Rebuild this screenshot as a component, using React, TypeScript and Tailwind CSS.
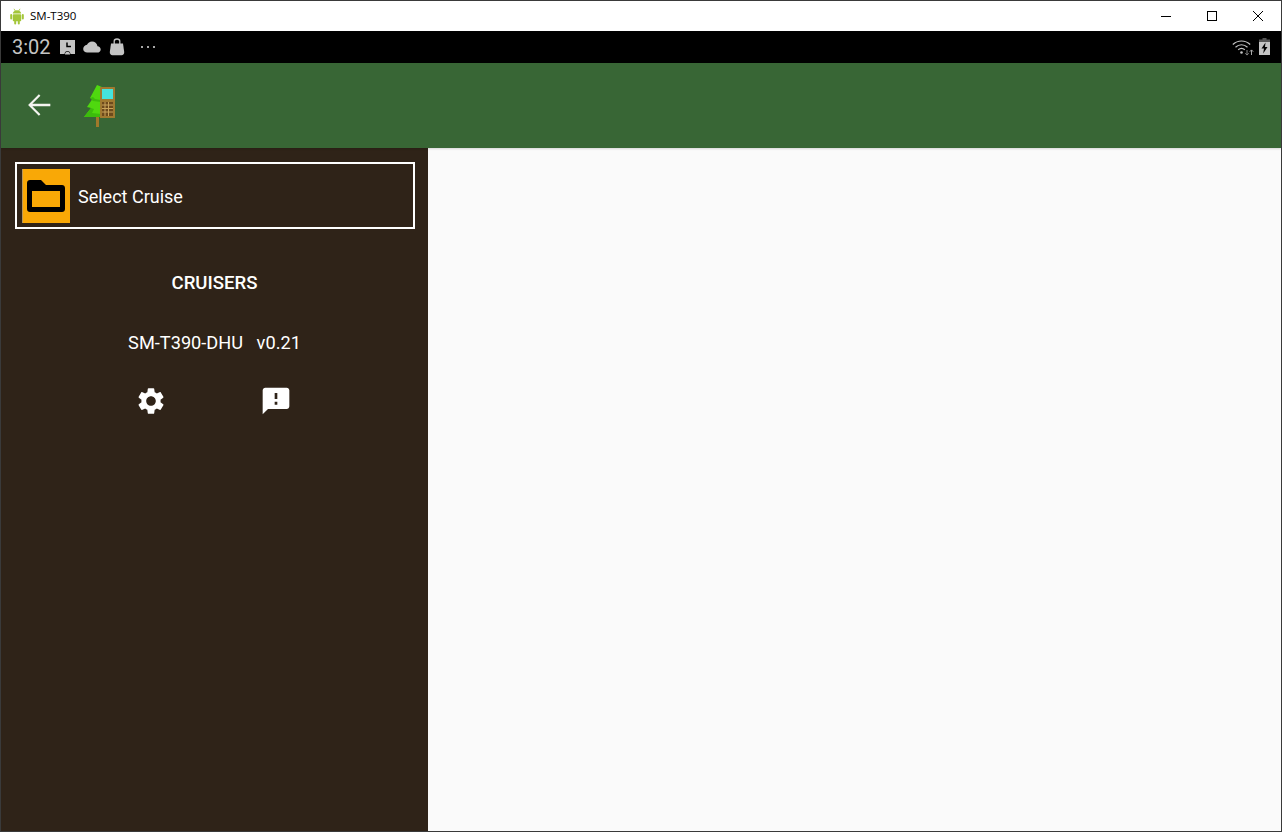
function AndroidLogo() {
  return (
    <svg width="16" height="17" viewBox="0 0 16 17" fill="#a4c639">
      <path d="M3.800 5.600c.2-2 1.900-3.400 4.200-3.400s4 1.400 4.200 3.400H3.800z" />
      <path d="M5 .8l1.300 2.200M11 .8L9.700 3" stroke="#a4c639" strokeWidth="0.8" />
      <rect x="3.800" y="6.200" width="8.400" height="7" rx="0.800" />
      <rect x="1.200" y="6" width="2" height="5.500" rx="1" />
      <rect x="12.800" y="6" width="2" height="5.500" rx="1" />
      <rect x="5.200" y="12.500" width="2" height="4" rx="1" />
      <rect x="8.800" y="12.500" width="2" height="4" rx="1" />
    </svg>
  );
}

function TitleBar() {
  return (
    <div className="h-[30px] bg-white flex items-center shrink-0">
      <div className="ml-[8px] mr-[5px] flex items-center">
        <AndroidLogo />
      </div>
      <span className="text-[11.500px] text-black font-['Open_Sans',sans-serif]">SM-T390</span>
      <div className="ml-auto flex items-center">
        <div className="w-[46px] h-[30px] flex items-center justify-center">
          <svg width="10" height="10" viewBox="0 0 10 10">
            <path d="M0 5.500h10" stroke="#000" strokeWidth="1" />
          </svg>
        </div>
        <div className="w-[46px] h-[30px] flex items-center justify-center">
          <svg width="10" height="10" viewBox="0 0 10 10">
            <rect x="0.500" y="0.500" width="9" height="9" fill="none" stroke="#000" strokeWidth="1" />
          </svg>
        </div>
        <div className="w-[46px] h-[30px] flex items-center justify-center">
          <svg width="10" height="10" viewBox="0 0 10 10">
            <path d="M0 0l10 10M10 0L0 10" stroke="#000" strokeWidth="1" />
          </svg>
        </div>
      </div>
    </div>
  );
}

function StatusBar() {
  return (
    <div className="h-[32px] bg-black flex items-center shrink-0 text-[#c4c4c4]">
      <span className="ml-[11px] text-[20px] leading-none font-['Roboto',sans-serif]">3:02</span>
      <div className="ml-[8px] flex items-center gap-[7px]">
        <svg width="17" height="17" viewBox="0 0 17 17" fill="#c4c4c4">
          <path d="M1 1h15v14h-4.500c-.3-2-1.400-3-3-3s-2.700 1-3 3H1V1z" />
          <path d="M6 14.500c.5-1.200 1.500-1.800 2.500-1.800s2 .6 2.500 1.800v1H6v-1z" />
          <path d="M8 3.500v4h4" fill="none" stroke="#000" strokeWidth="1.500" />
        </svg>
        <svg width="18" height="12" viewBox="0 0 18 12" fill="#c4c4c4">
          <path d="M14.500 5.200C14 2.500 11.800.5 9 .5 6.800.500 4.900 1.800 4 3.700 1.800 4 .2 5.800.2 8c0 2.300 1.800 3.500 4 3.500h10c1.900 0 3.500-1.100 3.500-3.100 0-1.700-1.400-3.100-3.200-3.200z" />
        </svg>
        <svg className="ml-[1px]" width="16" height="18" viewBox="0 0 16 18" fill="#c4c4c4">
          <path d="M2 5.500h12l1.200 8.500c.2 1.800-1 3.200-2.700 3.200h-9C1.800 17.200.600 15.800.8 14L2 5.500z" />
          <path d="M5.200 7V3.200C5.200 2 6.400 1 8 1s2.800 1 2.800 2.200V7" fill="none" stroke="#c4c4c4" strokeWidth="1.300" />
        </svg>
      </div>
      <div className="ml-[16px] flex items-center gap-[4px]">
        <span className="w-[2px] h-[2px] bg-[#a8a8a8]" />
        <span className="w-[2px] h-[2px] bg-[#a8a8a8]" />
        <span className="w-[2px] h-[2px] bg-[#a8a8a8]" />
      </div>
      <div className="ml-auto mr-[11px] flex items-center gap-[5px]">
        <svg width="22" height="17" viewBox="0 0 22 17" fill="none" stroke="#c4c4c4" strokeWidth="1.200">
          <path d="M.8 5.500C5.800.800 13.200.800 18.200 5.500" />
          <path d="M3.500 8.200c3.600-3.200 8.400-3.200 12 0" />
          <path d="M6.200 10.800c2-1.700 4.600-1.700 6.600 0" />
          <circle cx="9.500" cy="13.500" r="1.300" fill="#c4c4c4" stroke="none" />
          <path d="M15 11v5M13.300 14.300l1.700 1.800 1.700-1.800" strokeWidth="1" stroke="#888" />
          <path d="M19.500 16v-5M17.800 12.700l1.700-1.800 1.700 1.800" strokeWidth="1" stroke="#aaa" />
        </svg>
        <svg className="mb-[2px]" width="11" height="17" viewBox="0 0 11 17">
          <path d="M3.500 0h4v1.500H11V17H0V1.500h3.500V0z" fill="#555" />
          <path d="M0 4h11v13H0z" fill="#c4c4c4" />
          <path d="M6.500 4.500L2.500 10.500h2.500l-.8 5L8.500 9H6z" fill="#000" />
        </svg>
      </div>
    </div>
  );
}

// tree with a handheld data recorder in front of it
function AppLogo() {
  return (
    <svg width="32" height="43" viewBox="0 0 32 43">
      <rect x="12" y="32" width="3" height="10" fill="#a0792a" />
      <path d="M13 0l5 2v30H0l7-9-4-1 6-9-3 0z" fill="#4fd80f" />
      <path d="M0 32l7-9 3 1-2 4 9 1 1 3z" fill="#3cbc0c" />
      <path d="M6 13l3-1 2 2 6 1v2l-8-1z" fill="#3cbc0c" />
      <rect x="16" y="2" width="15" height="31" rx="0.500" fill="#a07a30" />
      <rect x="18" y="4" width="11" height="10" fill="#45e4dc" />
      <rect x="18" y="17" width="11" height="14" fill="#6d4a1c" />
      <path d="M18 20h11M18 23.500h11M18 27h11M21 17v14M24.500 17v14" stroke="#c9a35a" strokeWidth="1" />
    </svg>
  );
}

function Toolbar() {
  return (
    <div className="h-[85px] bg-[#386635] flex items-center shrink-0 shadow-[0_1px_2px_rgba(0,0,0,0.15)] relative">
      <svg className="ml-[21px] mb-[1px]" width="34" height="34" viewBox="0 0 24 24" fill="#f4f4f0">
        <path d="M20 11.200H7.300l5.700-5.700L11.900 4.400 4.300 12l7.600 7.600 1.100-1.100-5.700-5.700H20z" />
      </svg>
      <div className="ml-[28px] mt-[1px]">
        <AppLogo />
      </div>
    </div>
  );
}

function Sidebar() {
  return (
    <aside className="w-[427px] shrink-0 bg-[#2f2318] flex flex-col pt-[14px] font-['Roboto',sans-serif] text-white">
      <button className="ml-[14px] w-[400px] h-[67px] border-2 border-white flex items-center pl-[5px]">
        <div className="w-[48px] h-[54px] bg-[#f9a806] border-l border-[#b8965a] flex items-center justify-center pr-[1px]">
          <svg width="38" height="32" viewBox="0 0 38 32" fill="#000" fillRule="evenodd">
            <path d="M3 0h11l5 5h16c1.700 0 3 1.300 3 3v21c0 1.700-1.300 3-3 3H3c-1.700 0-3-1.300-3-3V3c0-1.700 1.300-3 3-3zM5 11v16h28V11z" />
          </svg>
        </div>
        <span className="ml-[8px] mt-[2px] text-[18px] leading-none">Select Cruise</span>
      </button>

      <div className="mt-[44px] text-center text-[18.600px] leading-[21px] font-medium">CRUISERS</div>

      <div className="mt-[38px] text-center text-[18.200px] leading-[21px] whitespace-pre">SM-T390-DHU   v0.21</div>

      <div className="mt-[32px] flex items-center justify-center gap-[93px] pr-[2px]">
        <svg width="32" height="32" viewBox="0 0 24 24" fill="#fff">
          <path d="M19.140 12.940c.04-.3.060-.61.060-.94 0-.32-.02-.64-.07-.94l2.030-1.580c.18-.14.230-.41.120-.61l-1.920-3.320c-.12-.22-.37-.29-.59-.22l-2.390.96c-.5-.38-1.030-.7-1.620-.94l-.36-2.540c-.04-.24-.24-.41-.48-.41h-3.840c-.24 0-.43.170-.47.410l-.36 2.540c-.59.240-1.130.570-1.620.94l-2.390-.96c-.22-.08-.47 0-.59.220L2.740 8.870c-.12.210-.08.470.12.610l2.030 1.580c-.05.300-.09.630-.09.940s.02.640.07.940l-2.030 1.580c-.18.140-.23.410-.12.610l1.920 3.320c.12.220.37.290.59.220l2.390-.96c.5.380 1.030.7 1.620.94l.36 2.540c.05.240.24.410.48.410h3.840c.24 0 .44-.17.47-.41l.36-2.540c.59-.24 1.130-.56 1.620-.94l2.390.96c.22.080.47 0 .59-.22l1.920-3.320c.12-.22.070-.47-.12-.61l-2.010-1.580zM12 15.600c-1.980 0-3.600-1.620-3.600-3.600s1.620-3.600 3.600-3.600 3.600 1.620 3.600 3.600-1.620 3.600-3.600 3.600z" />
        </svg>
        <svg width="32" height="32" viewBox="0 0 24 24" fill="#fff" fillRule="evenodd">
          <path d="M20 2H4c-1.100 0-1.990.9-1.990 2L2 22l4-4h14c1.100 0 2-.9 2-2V4c0-1.100-.9-2-2-2zM13 6h-2v4.500h2zM13 12.500h-2v2.300h2z" />
        </svg>
      </div>
    </aside>
  );
}

export default function App() {
  return (
    <div className="w-[1282px] h-[832px] flex flex-col bg-white border border-[#3a3a3a] overflow-hidden">
      <TitleBar />
      <StatusBar />
      <Toolbar />
      <div className="flex flex-1 min-h-0">
        <Sidebar />
        <main className="flex-1 bg-[#fafafa]" />
      </div>
    </div>
  );
}
